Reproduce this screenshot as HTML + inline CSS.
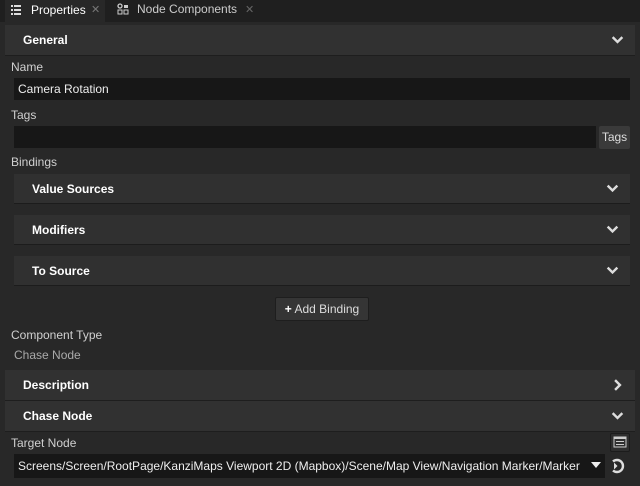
<!DOCTYPE html>
<html><head><style>
*{margin:0;padding:0;box-sizing:border-box}
body{width:640px;height:486px;background:#282828;font-family:"Liberation Sans",sans-serif;font-size:12px;color:#d6d6d6;position:relative;overflow:hidden}
.a{position:absolute}
.hdr{position:absolute;left:5px;width:630px;height:31px;background:#313131;border-bottom:1px solid #1e1e1e;color:#fff;font-weight:bold;font-size:12px;line-height:31px;padding-left:18px}
.sub{position:absolute;left:14px;width:616px;height:30px;background:#303030;border-bottom:1px solid #1c1c1c;color:#fff;font-weight:bold;line-height:30px;padding-left:18px}
.chev{position:absolute;right:11px;top:0;width:13px;height:100%}
.lbl{position:absolute;left:11px;color:#d0d0d0}
.inp{position:absolute;background:#171717;color:#eee;padding-left:4px}
</style></head><body>
<div class="a" style="left:0;top:0;width:640px;height:22px;background:#1f1f1f"></div>
<div class="a" style="left:5px;top:0;width:100px;height:22px;background:#282828"></div>
<svg class="a" style="left:11px;top:5px" width="12" height="10"><g fill="#ddd"><rect x="0" y="0" width="2" height="2"/><rect x="3" y="0" width="7" height="2"/><rect x="0" y="4" width="2" height="2"/><rect x="3" y="4" width="7" height="2"/><rect x="0" y="8" width="2" height="2"/><rect x="3" y="8" width="7" height="2"/></g></svg>
<div class="a" style="left:31px;top:3px;color:#fff">Properties</div>
<div class="a" style="left:91px;top:3px;color:#777;font-size:11px">✕</div>
<svg class="a" style="left:117px;top:3px" width="12" height="12"><circle cx="3" cy="3" r="2" fill="none" stroke="#ccc" stroke-width="1.3"/><rect x="1" y="7" width="4" height="4" fill="none" stroke="#ccc"/><rect x="7" y="2" width="4" height="3" fill="#ccc"/><rect x="7" y="7" width="4" height="4" fill="none" stroke="#ccc"/></svg>
<div class="a" style="left:137px;top:2px;color:#ccc">Node Components</div>
<div class="a" style="left:245px;top:3px;color:#666;font-size:11px">✕</div>

<div class="hdr" style="top:25px">General<svg class="chev" viewBox="0 0 13 31"><path d="M1.5 12.5l5 5 5-5" stroke="#ddd" stroke-width="2.5" fill="none"/></svg></div>
<div class="lbl" style="top:60px">Name</div>
<div class="inp" style="left:14px;top:78px;width:616px;height:22px;line-height:22px">Camera Rotation</div>
<div class="lbl" style="top:108px">Tags</div>
<div class="inp" style="left:14px;top:126px;width:582px;height:22px"></div>
<div class="a" style="left:599px;top:126px;width:31px;height:23px;background:#3a3a3a;border-radius:2px;line-height:23px;text-align:center;color:#ddd">Tags</div>
<div class="lbl" style="top:155px">Bindings</div>
<div class="sub" style="top:174px">Value Sources<svg class="chev" viewBox="0 0 13 30"><path d="M1.5 12l5 5 5-5" stroke="#ddd" stroke-width="2.5" fill="none"/></svg></div>
<div class="sub" style="top:215px">Modifiers<svg class="chev" viewBox="0 0 13 30"><path d="M1.5 12l5 5 5-5" stroke="#ddd" stroke-width="2.5" fill="none"/></svg></div>
<div class="sub" style="top:256px">To Source<svg class="chev" viewBox="0 0 13 30"><path d="M1.5 12l5 5 5-5" stroke="#ddd" stroke-width="2.5" fill="none"/></svg></div>
<div class="a" style="left:275px;top:297px;width:94px;height:24px;background:#353535;border:1px solid #1e1e1e;border-radius:2px;line-height:22px;text-align:center;color:#ddd"><b style="color:#fff">+</b> Add Binding</div>
<div class="lbl" style="top:328px">Component Type</div>
<div class="a" style="left:14px;top:348px;color:#aaa">Chase Node</div>
<div class="hdr" style="top:370px">Description<svg class="chev" viewBox="0 0 13 31"><path d="M4 10.5l5 5-5 5" stroke="#ddd" stroke-width="2.5" fill="none"/></svg></div>
<div class="hdr" style="top:401px">Chase Node<svg class="chev" viewBox="0 0 13 31"><path d="M1.5 12.5l5 5 5-5" stroke="#ddd" stroke-width="2.5" fill="none"/></svg></div>
<div class="lbl" style="top:436px">Target Node</div>
<div class="a" style="left:610px;top:433px;width:20px;height:19px;background:#2e2e2e;border:1px solid #1c1c1c;border-radius:2px"><svg width="18" height="17"><rect x="3" y="3" width="12" height="10" fill="none" stroke="#ccc"/><rect x="3" y="3" width="12" height="2" fill="#ccc"/><rect x="5" y="7" width="8" height="1" fill="#ccc"/><rect x="5" y="10" width="8" height="1" fill="#ccc"/></svg></div>
<div class="inp" style="left:14px;top:454px;width:591px;height:24px;line-height:24px;font-size:12px;white-space:nowrap;overflow:hidden">Screens/Screen/RootPage/KanziMaps Viewport 2D (Mapbox)/Scene/Map View/Navigation Marker/Marker</div>
<svg class="a" style="left:591px;top:462px" width="10" height="7"><path d="M0 0h10L5 6z" fill="#eee"/></svg>
<svg class="a" style="left:609px;top:458px" width="16" height="16"><path d="M4 3.5A6 6 0 1 1 4 12.5" stroke="#ddd" stroke-width="2.4" fill="none"/><path d="M5 4.5l3.5 3.5-3.5 3.5z" fill="#ddd"/></svg>
</body></html>
